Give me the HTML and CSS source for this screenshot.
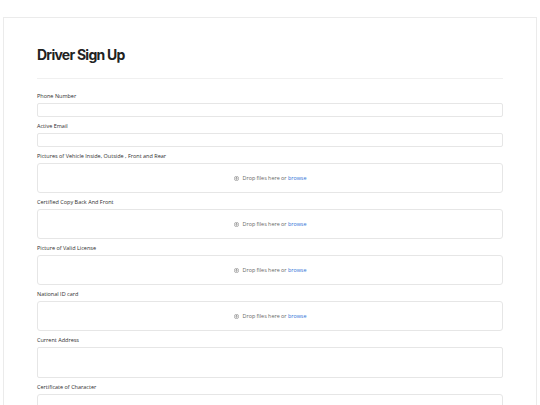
FILE: index.html
```html
<!DOCTYPE html>
<html lang="en">
<head>
<meta charset="utf-8">
<title>Driver Sign Up</title>
<link rel="stylesheet" href="styles.css">
</head>
<body>
<main class="card">
  <h1 class="title">Driver Sign Up</h1>
  <hr class="divider">
  <form class="form">
    <div class="field">
      <label class="label">Phone Number</label>
      <div class="input"></div>
    </div>
    <div class="field">
      <label class="label">Active Email</label>
      <div class="input"></div>
    </div>
    <div class="field">
      <label class="label">Pictures of Vehicle Inside, Outside , Front and Rear</label>
      <div class="drop">
        <svg class="drop-icon" viewBox="0 0 10 10" aria-hidden="true"><circle cx="5" cy="5" r="4.3" fill="none" stroke="#555" stroke-width="0.9"/><path d="M5 7V3.2M3.4 4.7L5 3.1l1.6 1.6" fill="none" stroke="#555" stroke-width="0.9" stroke-linecap="round" stroke-linejoin="round"/></svg>
        <span class="drop-text">Drop files here or <span class="browse">browse</span></span>
      </div>
    </div>
    <div class="field">
      <label class="label">Certified Copy Back And Front</label>
      <div class="drop">
        <svg class="drop-icon" viewBox="0 0 10 10" aria-hidden="true"><circle cx="5" cy="5" r="4.3" fill="none" stroke="#555" stroke-width="0.9"/><path d="M5 7V3.2M3.4 4.7L5 3.1l1.6 1.6" fill="none" stroke="#555" stroke-width="0.9" stroke-linecap="round" stroke-linejoin="round"/></svg>
        <span class="drop-text">Drop files here or <span class="browse">browse</span></span>
      </div>
    </div>
    <div class="field">
      <label class="label">Picture of Valid License</label>
      <div class="drop">
        <svg class="drop-icon" viewBox="0 0 10 10" aria-hidden="true"><circle cx="5" cy="5" r="4.3" fill="none" stroke="#555" stroke-width="0.9"/><path d="M5 7V3.2M3.4 4.7L5 3.1l1.6 1.6" fill="none" stroke="#555" stroke-width="0.9" stroke-linecap="round" stroke-linejoin="round"/></svg>
        <span class="drop-text">Drop files here or <span class="browse">browse</span></span>
      </div>
    </div>
    <div class="field">
      <label class="label">National ID card</label>
      <div class="drop">
        <svg class="drop-icon" viewBox="0 0 10 10" aria-hidden="true"><circle cx="5" cy="5" r="4.3" fill="none" stroke="#555" stroke-width="0.9"/><path d="M5 7V3.2M3.4 4.7L5 3.1l1.6 1.6" fill="none" stroke="#555" stroke-width="0.9" stroke-linecap="round" stroke-linejoin="round"/></svg>
        <span class="drop-text">Drop files here or <span class="browse">browse</span></span>
      </div>
    </div>
    <div class="field">
      <label class="label">Current Address</label>
      <div class="textarea"></div>
    </div>
    <div class="field">
      <label class="label">Certificate of Character</label>
      <div class="drop drop-empty"></div>
    </div>
  </form>
</main>
</body>
</html>
```

FILE: styles.css
```css
html, body {
  margin: 0;
  background: #ffffff;
}
body {
  padding: 17px 3px 0 3px;
  font-family: "Open Sans", "Noto Sans", sans-serif;
  color: #333;
}
.card {
  border: 1px solid #ebebeb;
  border-bottom: none;
  padding: 28px 33px 40px 33px;
  background: #fff;
}
.title {
  margin: 0;
  font-family: Inter, "Liberation Sans", sans-serif;
  font-weight: 700;
  font-size: 14px;
  line-height: 18px;
  letter-spacing: -0.75px;
  color: #222;
}
.divider {
  margin: 14px 0 13px 0;
  border: none;
  border-top: 1px solid #f0f0f0;
  height: 0;
}
.form {
  display: flex;
  flex-direction: column;
  gap: 5px;
}
.field {
  display: flex;
  flex-direction: column;
  gap: 3px;
}
.label {
  font-size: 5.5px;
  line-height: 8px;
  color: #2e2e2e;
}
.input {
  height: 12px;
  border: 1px solid #e6e6e6;
  border-radius: 2px;
  background: #fff;
}
.textarea {
  height: 29px;
  border: 1px solid #e6e6e6;
  border-radius: 2px;
  background: #fff;
}
.drop {
  height: 28px;
  border: 1px solid #e6e6e6;
  border-radius: 3px;
  background: #fff;
  display: flex;
  align-items: center;
  justify-content: center;
  gap: 4px;
}
.drop-icon {
  width: 5px;
  height: 5px;
}
.drop-text {
  font-size: 5.4px;
  line-height: 8px;
  color: #666;
}
.browse {
  color: #2f6fd6;
}
```
